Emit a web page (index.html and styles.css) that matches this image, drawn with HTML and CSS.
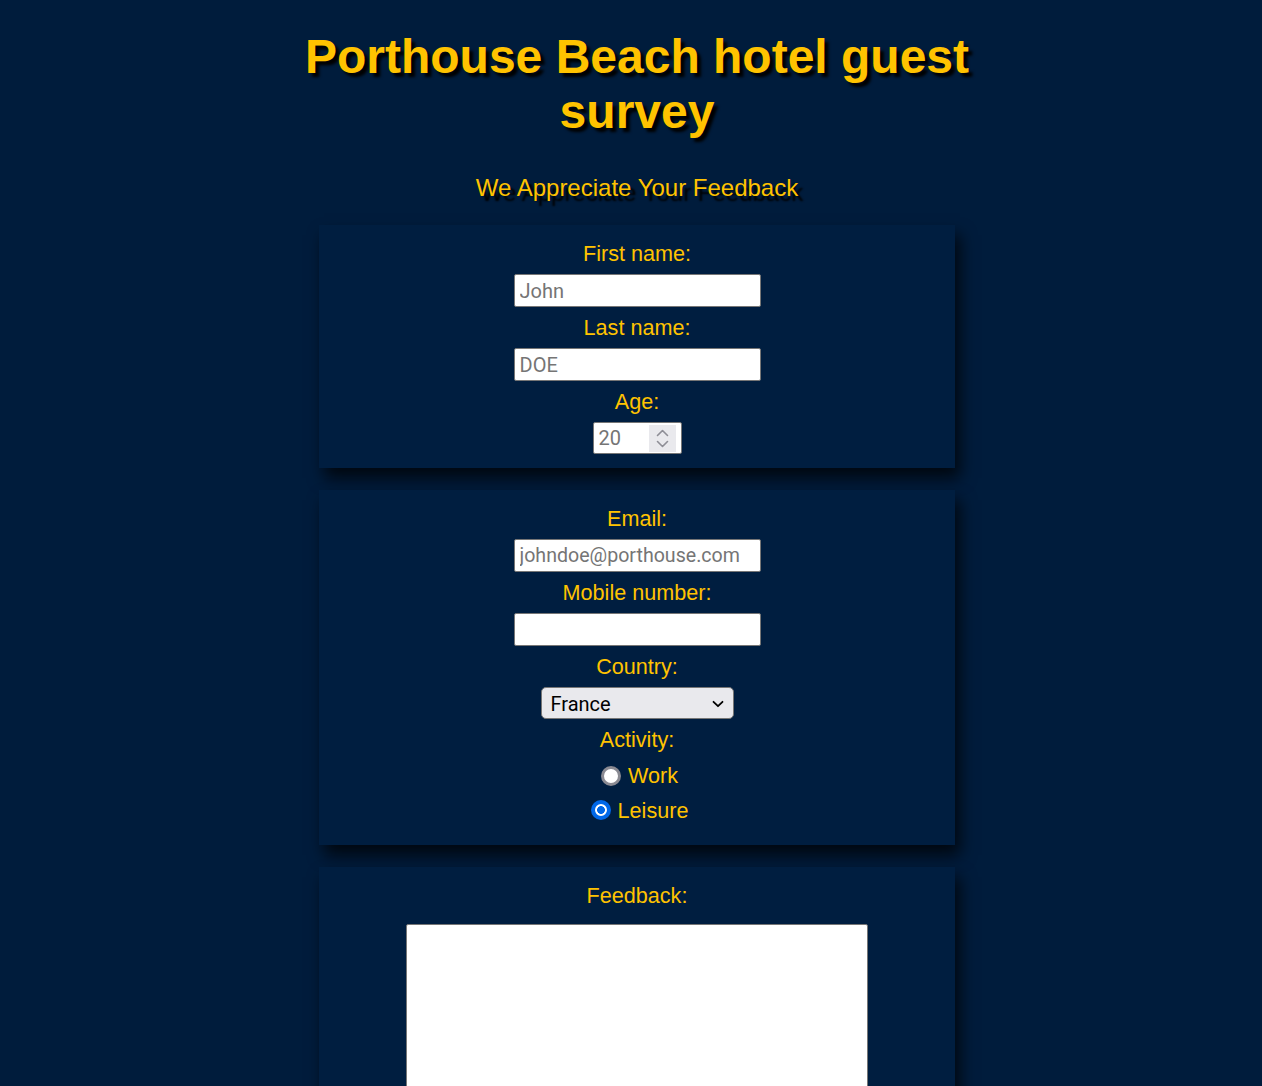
FILE: index.html
```html
<!DOCTYPE html>
<html lang="en">
<head>
<meta charset="utf-8">
<title>Porthouse Beach hotel guest survey</title>
<link rel="stylesheet" href="styles.css">
</head>
<body>
<div class="page">
  <header class="header">
    <h1 class="title">Porthouse Beach hotel guest survey</h1>
    <p class="subtitle">We Appreciate Your Feedback</p>
  </header>
  <form class="survey">
    <section class="card">
      <label class="field-label" for="first-name">First name:</label>
      <input class="text-input" id="first-name" type="text" placeholder="John">
      <label class="field-label" for="last-name">Last name:</label>
      <input class="text-input" id="last-name" type="text" placeholder="DOE">
      <label class="field-label" for="age">Age:</label>
      <div class="number-box">
        <input class="number-input" id="age" type="number" placeholder="20">
        <span class="spinner">
          <svg width="27" height="27" viewBox="0 0 27 27"><path d="M8.5 10.5 L13.5 5.5 L18.5 10.5" fill="none" stroke="#8e8e96" stroke-width="1.6" stroke-linecap="round" stroke-linejoin="round"/><path d="M8.5 16.5 L13.5 21.5 L18.5 16.5" fill="none" stroke="#8e8e96" stroke-width="1.6" stroke-linecap="round" stroke-linejoin="round"/></svg>
        </span>
      </div>
    </section>

    <section class="card">
      <label class="field-label" for="email">Email:</label>
      <input class="text-input email" id="email" type="email" placeholder="johndoe@porthouse.com">
      <label class="field-label" for="mobile">Mobile number:</label>
      <input class="text-input" id="mobile" type="tel">
      <label class="field-label" for="country">Country:</label>
      <div class="select-wrap">
        <select class="select" id="country">
          <option>France</option>
          <option>Germany</option>
          <option>Spain</option>
        </select>
        <svg class="select-arrow" width="12" height="8" viewBox="0 0 12 8"><path d="M1.5 1.8 L6 6.2 L10.5 1.8" fill="none" stroke="#000" stroke-width="1.8" stroke-linecap="round" stroke-linejoin="round"/></svg>
      </div>
      <span class="field-label">Activity:</span>
      <div class="radio-group">
        <label class="radio-row"><input class="radio" type="radio" name="activity" value="work"><span>Work</span></label>
        <label class="radio-row"><input class="radio" type="radio" name="activity" value="leisure" checked><span>Leisure</span></label>
      </div>
    </section>

    <section class="card">
      <label class="field-label" for="feedback">Feedback:</label>
      <textarea class="textarea" id="feedback"></textarea>
    </section>
  </form>
</div>
</body>
</html>
```
FILE: styles.css
```css
html, body {
  margin: 0;
  padding: 0;
  background: #001c3c;
}

body {
  font-family: "Liberation Sans", Arial, sans-serif;
  color: #ffc300;
}

.page {
  padding-left: 12px;
  padding-bottom: 40px;
}

.header {
  width: 700px;
  margin: 0 auto;
  text-align: center;
}

.title {
  margin: 29px 0 0;
  font-size: 48px;
  font-weight: bold;
  line-height: 55px;
  color: #ffc300;
  text-shadow: 4px 4px 3px #000;
}

.subtitle {
  margin: 35px 0 0;
  font-size: 24px;
  line-height: 27px;
  color: #ffc300;
  text-shadow: 5px 5px 2px #000;
}

.survey {
  width: 636px;
  margin: 24px auto 0;
  display: flex;
  flex-direction: column;
  gap: 22px;
}

.card {
  background: #001e40;
  box-shadow: 5px 10px 15px rgba(0, 0, 0, 0.75);
  padding: 16px 0 14px;
  display: flex;
  flex-direction: column;
  align-items: center;
  gap: 8px;
}

.field-label {
  display: block;
  font-size: 21.6px;
  line-height: 25px;
  color: #ffc300;
  text-align: center;
}

.text-input {
  box-sizing: border-box;
  width: 247px;
  height: 33px;
  margin: 0;
  padding: 0 5px;
  border: 1px solid #767676;
  border-radius: 2px;
  background: #fff;
  font-family: Roboto, "Noto Sans", sans-serif;
  font-size: 20px;
  color: #000;
}

.text-input.email {
  font-size: 19.6px;
}

.text-input::placeholder,
.number-input::placeholder {
  color: #757575;
}

.number-box {
  box-sizing: border-box;
  width: 89px;
  height: 32px;
  display: flex;
  align-items: center;
  border: 1px solid #767676;
  border-radius: 2px;
  background: #fff;
  padding: 0 5px 0 0;
}

.number-input {
  flex: 1;
  min-width: 0;
  height: 100%;
  box-sizing: border-box;
  margin: 0;
  padding: 0 0 0 5px;
  border: none;
  outline: none;
  background: transparent;
  font-family: Roboto, "Noto Sans", sans-serif;
  font-size: 20px;
  -moz-appearance: textfield;
}

.number-input::-webkit-inner-spin-button,
.number-input::-webkit-outer-spin-button {
  -webkit-appearance: none;
  margin: 0;
}

.spinner {
  display: block;
  width: 27px;
  height: 27px;
  background: #e9e9ed;
}

.spinner svg {
  display: block;
}

.select-wrap {
  position: relative;
  width: 193px;
  height: 32px;
}

.select {
  -webkit-appearance: none;
  appearance: none;
  box-sizing: border-box;
  width: 193px;
  height: 32px;
  margin: 0;
  padding: 2px 30px 0 9px;
  border: 1px solid #767676;
  border-radius: 5px;
  background: #e9e9ed;
  font-family: Roboto, "Noto Sans", sans-serif;
  font-size: 20px;
  color: #000;
}

.select-arrow {
  position: absolute;
  right: 10px;
  top: 13px;
  pointer-events: none;
}

.radio-group {
  display: flex;
  flex-direction: column;
  align-items: center;
  gap: 7.5px;
  margin: 2px 0 7.5px;
}

.radio-row {
  display: flex;
  align-items: center;
  height: 27px;
  font-size: 21.6px;
  line-height: 25px;
  color: #ffc300;
  gap: 7px;
}

.radio {
  -webkit-appearance: none;
  appearance: none;
  box-sizing: border-box;
  width: 20px;
  height: 20px;
  margin: 0 0 0 5px;
  border: 3px solid #8a8a92;
  border-radius: 50%;
  background: #fff;
}

.radio:checked {
  border: 4px solid #0068e8;
  background: radial-gradient(circle, #0068e8 0 3.6px, #fff 4.2px);
}

.textarea {
  box-sizing: border-box;
  width: 462px;
  height: 200px;
  margin: 8px 0 0;
  border: 1px solid #767676;
  border-radius: 2px;
  background: #fff;
  resize: vertical;
}
```
